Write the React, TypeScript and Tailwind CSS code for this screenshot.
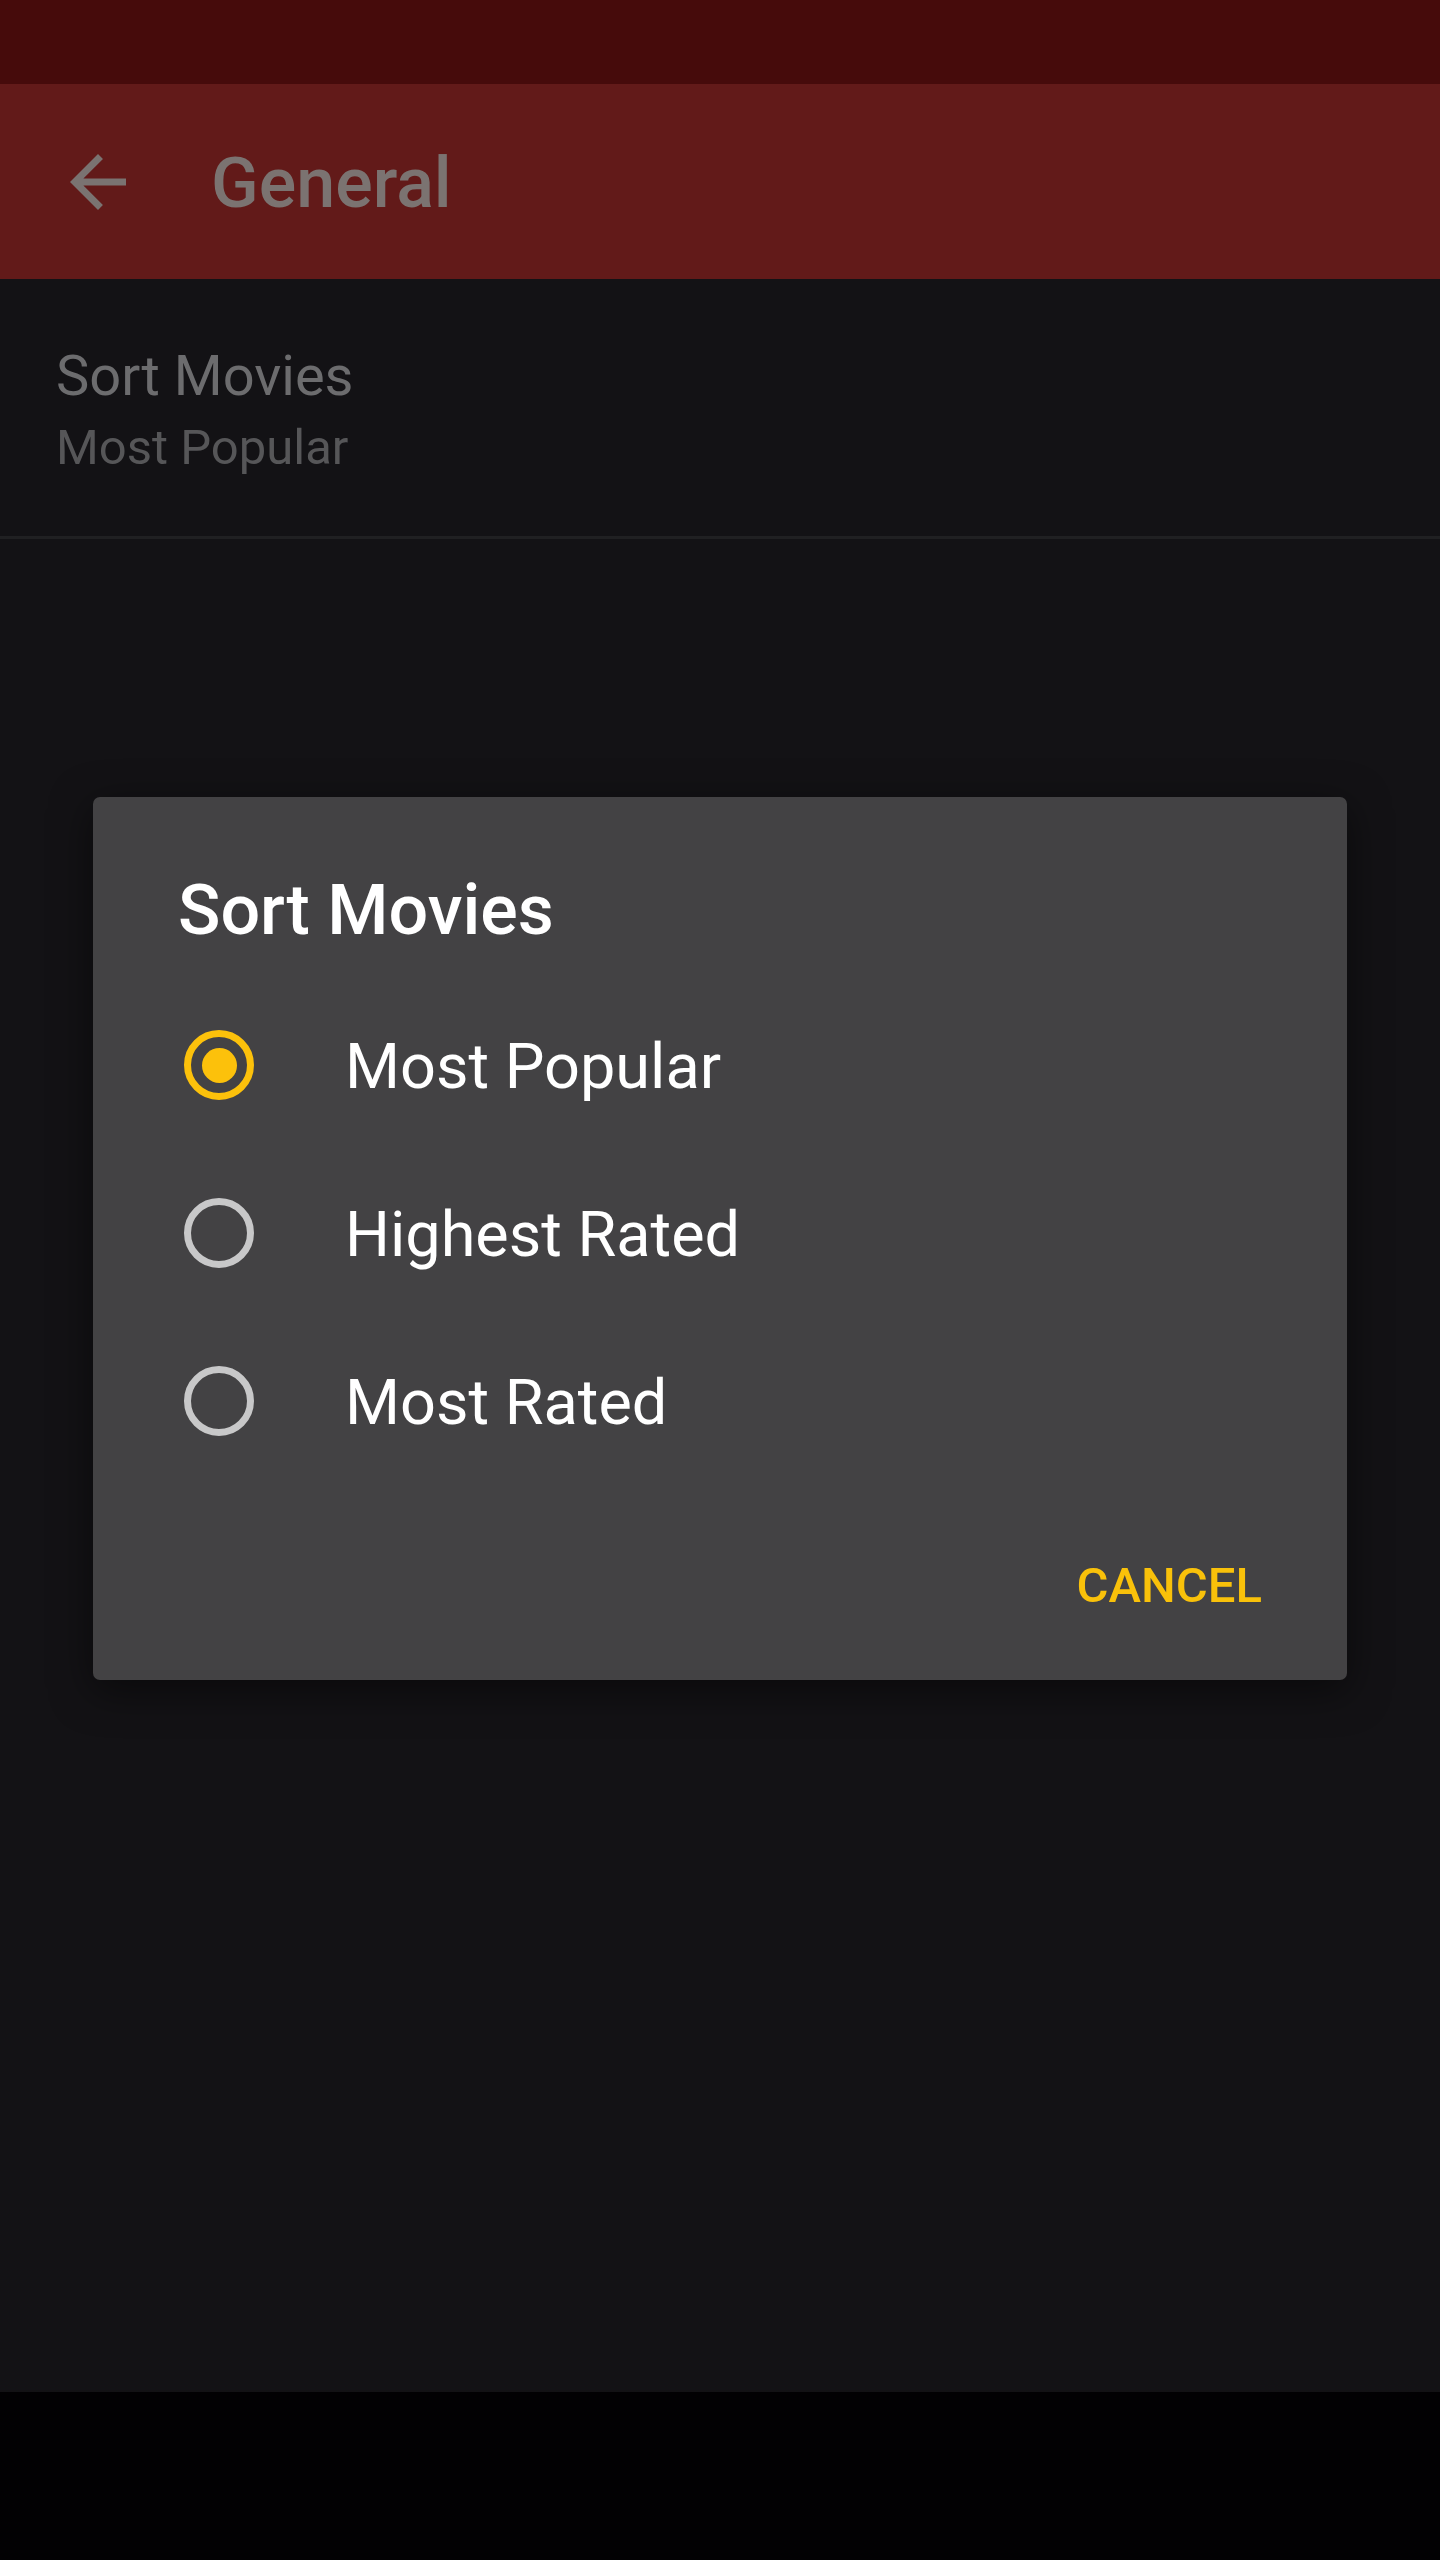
import React from "react";

function Radio({ checked }: { checked: boolean }) {
  return checked ? (
    <div className="w-[70px] h-[70px] rounded-full border-[7px] border-[#fcc10b] flex items-center justify-center shrink-0">
      <div className="w-[35px] h-[35px] rounded-full bg-[#fcc10b]" />
    </div>
  ) : (
    <div className="w-[70px] h-[70px] rounded-full border-[7px] border-[#c8c8c9] shrink-0" />
  );
}

export default function App() {
  const options = [
    { label: "Most Popular", checked: true },
    { label: "Highest Rated", checked: false },
    { label: "Most Rated", checked: false },
  ];
  return (
    <div
      className="relative w-[1440px] h-[2560px] bg-[#131215] flex flex-col overflow-hidden"
      style={{ fontFamily: "Roboto, 'Liberation Sans', sans-serif" }}
    >
      {/* status bar */}
      <div className="h-[84px] bg-[#460b0b] shrink-0" />
      {/* toolbar */}
      <div className="h-[195px] bg-[#621a19] flex items-center shrink-0">
        <div className="ml-[56px] w-[84px] h-[84px] shrink-0">
          <svg viewBox="0 0 24 24" width="84" height="84">
            <path
              d="M20 11H7.83l5.59-5.59L12 4l-8 8 8 8 1.41-1.41L7.83 13H20v-2z"
              fill="#7a7371"
            />
          </svg>
        </div>
        <div className="ml-[71px] mt-[3px] text-[70px] leading-[70px] font-medium text-[#7b7371]">
          General
        </div>
      </div>
      {/* settings item */}
      <div className="pl-[56px] pt-[69px] pb-[64px] flex flex-col shrink-0">
        <div className="text-[56px] leading-[56px] text-[#6c6c6e]">Sort Movies</div>
        <div className="mt-[19px] text-[49px] leading-[49px] text-[#565658]">Most Popular</div>
      </div>
      <div className="h-[3px] bg-[#202022] shrink-0" />
      <div className="flex-1" />
      {/* nav bar */}
      <div className="h-[168px] bg-[#020103] shrink-0" />

      {/* dialog */}
      <div className="absolute left-[93px] top-[797px] w-[1254px] h-[883px] bg-[#434244] rounded-[7px] shadow-[0_10px_40px_rgba(0,0,0,0.5)] flex flex-col">
        <div className="pt-[78px] pl-[85px] text-[70px] leading-[70px] font-medium text-white">
          Sort Movies
        </div>
        <div className="mt-[36px] flex flex-col">
          {options.map((o) => (
            <div key={o.label} className="h-[168px] flex items-center pl-[91px]">
              <Radio checked={o.checked} />
              <div className="ml-[91px] mt-[3px] text-[63px] leading-[63px] text-white">{o.label}</div>
            </div>
          ))}
        </div>
        <div className="flex-1" />
        <div className="flex justify-end pr-[85px] pb-[70px]">
          <div className="text-[49px] leading-[49px] font-medium text-[#f9c10a]">CANCEL</div>
        </div>
      </div>
    </div>
  );
}
